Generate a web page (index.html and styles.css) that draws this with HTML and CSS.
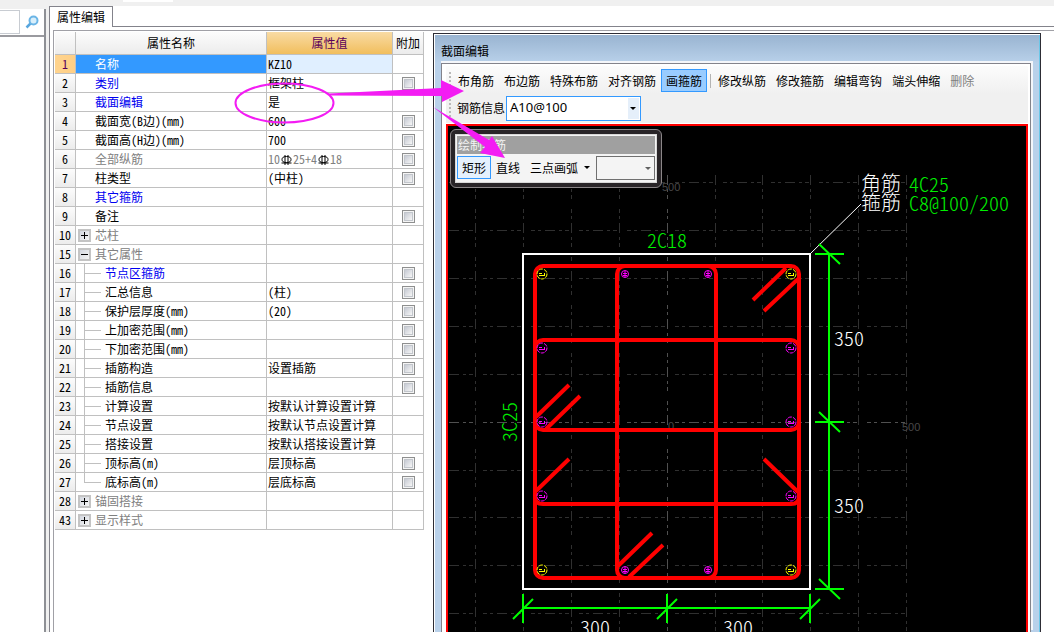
FILE: index.html
```
<!DOCTYPE html>
<html lang="zh-CN">
<head>
<meta charset="utf-8">
<title>属性编辑</title>
<link rel="stylesheet" href="styles.css">
</head>
<body>
<div class="strip"><span class="strip-field"></span></div>
<div class="main">
  <aside class="side">
    <form class="search">
      <input class="search-input" type="text" aria-label="搜索">
      <button class="search-button" type="button" aria-label="搜索">
        <svg width="14" height="14" viewBox="0 0 14 14"><path d="M1.5 12.500 6 8" stroke="#58a6de" stroke-width="2.500"/><circle cx="8.500" cy="5.500" r="4" fill="#d9effb" stroke="#6bb5e6" stroke-width="2"/></svg>
      </button>
    </form>
    <div class="side-body"></div>
  </aside>
  <section class="pane">
    <div class="tabs"><button class="tab" type="button">属性编辑</button></div>
    <div class="page">
      <div class="view">
        <table class="grid">
          <colgroup><col class="c-num"><col class="c-name"><col class="c-value"><col class="c-extra"></colgroup>
          <thead><tr><th></th><th>属性名称</th><th class="current">属性值</th><th>附加</th></tr></thead>
          <tbody>
            <tr class="selected"><th>1</th><td><div class="name">名称</div></td><td>KZ10</td><td></td></tr>
            <tr><th>2</th><td><div class="name link">类别</div></td><td>框架柱</td><td><input type="checkbox" aria-label="类别附加"></td></tr>
            <tr><th>3</th><td><div class="name link">截面编辑</div></td><td>是</td><td></td></tr>
            <tr><th>4</th><td><div class="name">截面宽(B边)(mm)</div></td><td>600</td><td><input type="checkbox" aria-label="截面宽附加"></td></tr>
            <tr><th>5</th><td><div class="name">截面高(H边)(mm)</div></td><td>700</td><td><input type="checkbox" aria-label="截面高附加"></td></tr>
            <tr><th>6</th><td><div class="name muted">全部纵筋</div></td><td><div class="bars muted">10<svg class="rebar" viewBox="0 0 13 12"><path d="M5 2v10M8 2v10M1.500 10h10"/><ellipse cx="6.500" cy="6.500" rx="4.500" ry="3"/></svg>25+4<svg class="rebar" viewBox="0 0 13 12"><path d="M5 2v10M8 2v10M1.500 10h10"/><ellipse cx="6.500" cy="6.500" rx="4.500" ry="3"/></svg>18</div></td><td><input type="checkbox" aria-label="全部纵筋附加"></td></tr>
            <tr><th>7</th><td><div class="name">柱类型</div></td><td>(中柱)</td><td><input type="checkbox" aria-label="柱类型附加"></td></tr>
            <tr><th>8</th><td><div class="name link">其它箍筋</div></td><td></td><td></td></tr>
            <tr><th>9</th><td><div class="name">备注</div></td><td></td><td><input type="checkbox" aria-label="备注附加"></td></tr>
            <tr><th>10</th><td><div class="group"><button class="expander plus" type="button" aria-label="展开芯柱"></button>芯柱</div></td><td></td><td></td></tr>
            <tr><th>15</th><td><div class="group"><button class="expander" type="button" aria-label="收起其它属性"></button>其它属性</div></td><td></td><td></td></tr>
            <tr><th>16</th><td><div class="child link">节点区箍筋</div></td><td></td><td><input type="checkbox" aria-label="节点区箍筋附加"></td></tr>
            <tr><th>17</th><td><div class="child">汇总信息</div></td><td>(柱)</td><td><input type="checkbox" aria-label="汇总信息附加"></td></tr>
            <tr><th>18</th><td><div class="child">保护层厚度(mm)</div></td><td>(20)</td><td><input type="checkbox" aria-label="保护层厚度附加"></td></tr>
            <tr><th>19</th><td><div class="child">上加密范围(mm)</div></td><td></td><td><input type="checkbox" aria-label="上加密范围附加"></td></tr>
            <tr><th>20</th><td><div class="child">下加密范围(mm)</div></td><td></td><td><input type="checkbox" aria-label="下加密范围附加"></td></tr>
            <tr><th>21</th><td><div class="child">插筋构造</div></td><td>设置插筋</td><td><input type="checkbox" aria-label="插筋构造附加"></td></tr>
            <tr><th>22</th><td><div class="child">插筋信息</div></td><td></td><td><input type="checkbox" aria-label="插筋信息附加"></td></tr>
            <tr><th>23</th><td><div class="child">计算设置</div></td><td>按默认计算设置计算</td><td></td></tr>
            <tr><th>24</th><td><div class="child">节点设置</div></td><td>按默认节点设置计算</td><td></td></tr>
            <tr><th>25</th><td><div class="child">搭接设置</div></td><td>按默认搭接设置计算</td><td></td></tr>
            <tr><th>26</th><td><div class="child">顶标高(m)</div></td><td>层顶标高</td><td><input type="checkbox" aria-label="顶标高附加"></td></tr>
            <tr><th>27</th><td><div class="child last">底标高(m)</div></td><td>层底标高</td><td><input type="checkbox" aria-label="底标高附加"></td></tr>
            <tr><th>28</th><td><div class="group"><button class="expander plus" type="button" aria-label="展开锚固搭接"></button>锚固搭接</div></td><td></td><td></td></tr>
            <tr><th>43</th><td><div class="group"><button class="expander plus" type="button" aria-label="展开显示样式"></button>显示样式</div></td><td></td><td></td></tr>
          </tbody>
        </table>

        <section class="window">
          <h2 class="title">截面编辑</h2>
          <div class="client">
            <div class="toolbars">
              <div class="toolbar">
                <span class="grip"></span>
                <button type="button">布角筋</button><button type="button">布边筋</button><button type="button">特殊布筋</button><button type="button">对齐钢筋</button><button type="button" class="pressed">画箍筋</button><span class="divider"></span><button type="button">修改纵筋</button><button type="button">修改箍筋</button><button type="button">编辑弯钩</button><button type="button">端头伸缩</button><button type="button" disabled>删除</button>
              </div>
              <div class="toolbar">
                <span class="grip"></span>
                <label class="info-label" for="info">钢筋信息</label>
                <span class="combo"><select id="info"><option>A10@100</option></select></span>
              </div>
            </div>
            <div class="canvas">
              <svg class="drawing" viewBox="448 126 578 506">
                <g class="axis">
                  <path d="M449 182.500H914M449 230.500H914M449 278.500H914M449 326.500H914M449 374.500H914M449 470.500H914M449 517.500H914M449 565.500H914M449 613.500H914"/>
                  <path d="M475.500 175V632M523.500 175V632M571.500 175V632M619.500 175V632M715.500 175V632M762.500 175V632M810.500 175V632M858.500 175V632M906.500 175V632"/>
                  <path class="center" d="M449 422.500H914M667.500 175V632"/>
                </g>
                <g class="scale"><text x="662" y="191">500</text><text x="902" y="431">500</text><text x="668" y="430">0</text></g>
                <rect x="523" y="254" width="287" height="335" class="outline"/>
                <path d="M810.500 253.500 861 204" class="leader"/>
                <g class="stirrup">
                  <rect x="535" y="266" width="264" height="312" rx="8"/>
                  <rect x="617" y="266" width="99" height="312" rx="8"/>
                  <rect x="535" y="340" width="264" height="90" rx="8"/>
                  <path d="M535 496Q535 504 543 504H791Q799 504 799 496"/>
                  <path d="M536 417 569 385M546 429 580 396M536 491 569 459M764 459 798 492M618 566 652 533M629 577 663 545M786 268 753 300M798 279 764 311"/>
                </g>
                <defs>
                  <g id="bar"><circle r="5" stroke-dasharray="4 1"/><path d="M-3-.5H0M-3 1.500H3M2.500-1V1.500"/></g>
                  <g id="thin"><circle r="3.500"/><path d="M-2-.5H2M-2 1.500H2M0-3V3"/></g>
                </defs>
                <g class="corner"><use href="#bar" x="542" y="274"/><use href="#bar" x="791" y="274"/><use href="#bar" x="542" y="570"/><use href="#bar" x="791" y="570"/></g>
                <g class="edge"><use href="#bar" x="542" y="348"/><use href="#bar" x="791" y="348"/><use href="#bar" x="542" y="422"/><use href="#bar" x="791" y="422"/><use href="#bar" x="542" y="496"/><use href="#bar" x="791" y="496"/><use href="#thin" x="625" y="274"/><use href="#thin" x="708" y="274"/><use href="#thin" x="625" y="570"/><use href="#thin" x="708" y="570"/></g>
                <g class="dimension">
                  <path d="M829 254V589M815 254H844M815 422H844M815 589H844M819 244 840 264M819 412 840 432M819 579 840 599"/>
                  <path d="M523 608H810M523 594V623M667 594V623M810 594V623M513 619 533 599M657 619 677 599M800 619 820 599"/>
                </g>
                <g class="cad white"><text x="861" y="191">角筋</text><text x="861" y="210">箍筋</text><text x="834" y="346">350</text><text x="834" y="513">350</text><text x="580" y="635">300</text><text x="723" y="635">300</text></g>
                <g class="cad green"><text x="909" y="192">4C25</text><text x="909" y="211">C8@100/200</text><text x="647" y="248">2C18</text><text transform="translate(517 442) rotate(-90)">3C25</text></g>
              </svg>
              <div class="palette">
                <div class="palette-body">
                  <div class="palette-title">绘制箍筋</div>
                  <div class="palette-tools">
                    <button type="button" class="hot">矩形</button><button type="button">直线</button><button type="button">三点画弧</button><button type="button" class="drop" aria-label="更多画弧方式"></button>
                    <span class="combo small"><select aria-label="画弧参数" disabled><option></option></select></span>
                  </div>
                </div>
              </div>
            </div>
          </div>
        </section>
      </div>
    </div>
  </section>
</div>
<svg class="callouts" viewBox="0 0 520 170" aria-hidden="true">
  <ellipse cx="284.500" cy="103" rx="49" ry="19.500"/>
  <path d="M329 93.500 441 88V80L464 91 442 102V96L329 95.500ZM433 107 489 140 492 136 505 158 480 153 485 147Z"/>
</svg>
</body>
</html>
```
FILE: styles.css
```
* { box-sizing: border-box; }

body {
  margin: 0;
  height: 100vh;
  display: flex;
  flex-direction: column;
  overflow: hidden;
  position: relative;
  background: #f0f0f0;
  color: #000;
  font: 12px/18px "Noto Sans CJK SC", sans-serif;
}

button, input, select {
  margin: 0;
  padding: 0;
  border: 0;
  border-radius: 0;
  background: none;
  color: inherit;
  font: inherit;
}

.strip { flex: none; height: 6px; padding-left: 123px; }
.strip-field { display: block; width: 50px; height: 2px; background: #fff; }

.main { flex: 1; min-height: 0; display: flex; gap: 3px; }

/* Left search panel */
.side {
  flex: none;
  width: 46px;
  margin-top: 3px;
  display: flex;
  flex-direction: column;
  border-right: 2px solid #8e9095;
}
.search {
  height: 28px;
  display: flex;
  align-items: center;
  gap: 5px;
  background: #fff;
  border-bottom: 2px solid #9a9a9f;
}
.search-input { width: 20px; height: 24px; border: 1px solid #c8ccd2; border-left: 0; background: #fff; }
.search-button { display: flex; }
.search-button svg { fill: none; }
.side-body { flex: 1; background: #fff; }

/* Property page */
.pane { flex: 1; min-width: 0; display: flex; flex-direction: column; background: #fff; }
.tabs { height: 20px; display: flex; }
.tab {
  width: 64px;
  height: 21px;
  position: relative;
  background: #fff;
  border: 1px solid #83838b;
  border-bottom: 0;
  line-height: 18px;
}
.page {
  flex: 1;
  min-height: 0;
  display: flex;
  padding: 3px 0 0 3px;
  border-top: 1px solid #83838b;
  border-left: 1px solid #83838b;
}
.view {
  flex: 1;
  min-width: 0;
  display: flex;
  align-items: flex-start;
  padding: 1px 0 0 1px;
  border-top: 1px solid #a0a0a6;
  border-left: 1px solid #a0a0a6;
}

.grid {
  flex: none;
  width: 369px;
  table-layout: fixed;
  border-collapse: separate;
  border-spacing: 0;
  font-feature-settings: "hwid";
}
.c-num { width: 21px; }
.c-name { width: 191px; }
.c-value { width: 126px; }
.c-extra { width: 31px; }
.grid th, .grid td {
  height: 19px;
  padding: 0;
  border-right: 1px solid #c0c0c0;
  border-bottom: 1px solid #c0c0c0;
  line-height: 18px;
  font-weight: 400;
  white-space: nowrap;
}
.grid td:nth-child(3) { padding-left: 1px; }
.grid td:nth-child(4) { text-align: center; line-height: 0; }
.grid th { background: linear-gradient(#fcfcfc, #ececec); text-align: center; }
.grid thead th { height: 23px; }
.grid thead .current { background: linear-gradient(#f9dba4, #f1be5d); color: #5a005a; }

.name { padding-left: 19px; }
.link { color: #0000f0; }
.muted, .group { color: #808080; }
.selected th:first-child { background: linear-gradient(90deg, #ffd48e, #ffcf86); color: #5a005a; }
.selected td:nth-child(2) { background: #3399ff; color: #fff; }
.selected td:nth-child(3) { background: #e0efff; }

.bars { display: flex; align-items: center; }
.rebar { width: 13px; height: 12px; fill: none; stroke: #000; stroke-width: 1; }

.group { display: flex; align-items: center; gap: 4px; padding-left: 2px; }
.expander {
  width: 13px;
  height: 13px;
  border: 2px solid #c4c4c4;
  background:
    linear-gradient(#000, #000) center / 7px 1px no-repeat,
    linear-gradient(135deg, #d4d8e0, #f4f4f4);
}
.expander.plus {
  background:
    linear-gradient(#000, #000) center / 7px 1px no-repeat,
    linear-gradient(#000, #000) center / 1px 7px no-repeat,
    linear-gradient(135deg, #d4d8e0, #f4f4f4);
}
.child {
  padding-left: 29px;
  background:
    linear-gradient(#c0c0c0, #c0c0c0) 8px 0 / 1px 100% no-repeat,
    linear-gradient(#c0c0c0, #c0c0c0) 8px 9px / 17px 1px no-repeat;
}
.child.last {
  background:
    linear-gradient(#c0c0c0, #c0c0c0) 8px 0 / 1px 10px no-repeat,
    linear-gradient(#c0c0c0, #c0c0c0) 8px 9px / 17px 1px no-repeat;
}

.grid input {
  appearance: none;
  width: 13px;
  height: 13px;
  border: 1px solid #8e8f8f;
  background: linear-gradient(135deg, #c6cad3, #f6f6f6) center / 7px 7px no-repeat #f4f4f4;
  box-shadow: inset 0 0 0 1px #f4f4f4, inset 0 0 0 2px #c2c6cc;
}

/* Section editor window */
.window {
  flex: 1;
  min-width: 0;
  align-self: stretch;
  display: flex;
  flex-direction: column;
  margin: 1px 13px 0 9px;
  padding: 0 9px 0 7px;
  border: 1px solid #2d2d35;
  border-bottom: 0;
  background: #b9d1ea;
  box-shadow: inset 1px 1px #fff, inset -1px 0 #6cc7e8;
}
.title {
  margin: 1px -8px 0 -6px;
  padding: 7px 6px 0;
  height: 28px;
  background: linear-gradient(#99b4d1, #b9d1ea);
  font-size: 12px;
  font-weight: 400;
  line-height: 18px;
}
.client {
  flex: 1;
  min-height: 0;
  display: flex;
  flex-direction: column;
  padding: 2px 2px 0 4px;
  border: 1px solid #83838b;
  border-bottom: 0;
  background: #fff;
  box-shadow: 2px -2px #f4f6fa, 0 -2px #f4f6fa;
}
.toolbars {
  flex: none;
  margin-bottom: 1px;
  padding: 1px 0;
  background: linear-gradient(#fcfcfc, #f0f0f0 28px);
}
.toolbar { display: flex; align-items: center; height: 27px; }
.toolbar + .toolbar { height: 28px; }
.grip {
  width: 2px;
  height: 18px;
  margin: 0 2px 0 3px;
  background: repeating-linear-gradient(#b8b8b8 0 2px, transparent 2px 4px);
}
.toolbar button { height: 23px; padding: 0 4px; border: 1px solid transparent; }
.toolbar button:disabled { color: #808080; }
.toolbar .pressed { background: #99ccff; border-color: #3399ff; }
.divider { width: 1px; height: 14px; margin: 0 2px 0 3px; background: #b4b4b4; }
.info-label { margin: 0 1px 0 4px; }

.combo { position: relative; display: flex; }
.combo select {
  appearance: none;
  width: 135px;
  height: 25px;
  padding: 0 14px 2px 3px;
  border: 1px solid #3399ff;
  background: linear-gradient(#e5effa, #e5effa) right 1px center / 11px 21px no-repeat #fff;
  font: 13px/20px "Noto Sans", sans-serif;
}
.combo::after {
  content: "";
  position: absolute;
  top: 11px;
  right: 5px;
  border: 3px solid transparent;
  border-top-color: #000;
  border-bottom: 0;
  pointer-events: none;
}

.canvas {
  flex: 1;
  min-height: 0;
  position: relative;
  border: 2px solid #f00;
  border-bottom: 0;
  background: #000;
  overflow: hidden;
}
.drawing { display: block; width: 578px; height: 506px; fill: none; }
.axis { stroke: #303030; stroke-dasharray: 10 4 3 3 4; }
.axis .center { stroke: #505050; }
.scale { fill: #484848; font: 11px "Liberation Sans", sans-serif; }
.outline { stroke: #fff; stroke-width: 2; }
.leader { stroke: #fff; }
.stirrup { stroke: #f00; stroke-width: 4; }
.corner { stroke: #ff0; }
.edge { stroke: #f0f; }
.dimension { stroke: #0f0; stroke-width: 2; }
.cad { font: 300 20px "Noto Sans CJK SC", sans-serif; font-feature-settings: "hwid"; }
.white { fill: #fff; }
.green { fill: #0e0; }

/* Floating stirrup palette */
.palette {
  position: absolute;
  top: 3px;
  left: 2px;
  padding: 4px;
  border: 1px solid #8b8688;
  border-radius: 6px;
  background: #292528;
}
.palette-body { width: 202px; padding: 1px; border: 1px solid #d8d8d8; background: #f4f4f4; }
.palette-title { height: 18px; padding-left: 1px; background: #a0a0a0; color: #f4f4f4; line-height: 18px; }
.palette-tools { display: flex; align-items: center; height: 27px; }
.palette-tools button { height: 23px; padding: 0 4px; border: 1px solid transparent; }
.palette-tools .hot { border-color: #3399ff; background: #e5f1fd; }
.palette-tools .drop { width: 13px; padding: 0 5px 0 0; display: flex; align-items: center; justify-content: center; }
.drop::after { content: ""; border: 3px solid transparent; border-top-color: #000; border-bottom: 0; }
.small { flex: 1; }
.small select {
  width: 100%;
  height: 24px;
  border-color: #707070;
  background: #f4f4f4;
  opacity: 1;
}
.small::after { right: 4px; border-top-color: #606060; }

.callouts {
  position: absolute;
  top: 0;
  left: 0;
  width: 520px;
  height: 170px;
  pointer-events: none;
  fill: #f31cf3;
}
.callouts ellipse { fill: none; stroke: #f31cf3; stroke-width: 2; }
```
